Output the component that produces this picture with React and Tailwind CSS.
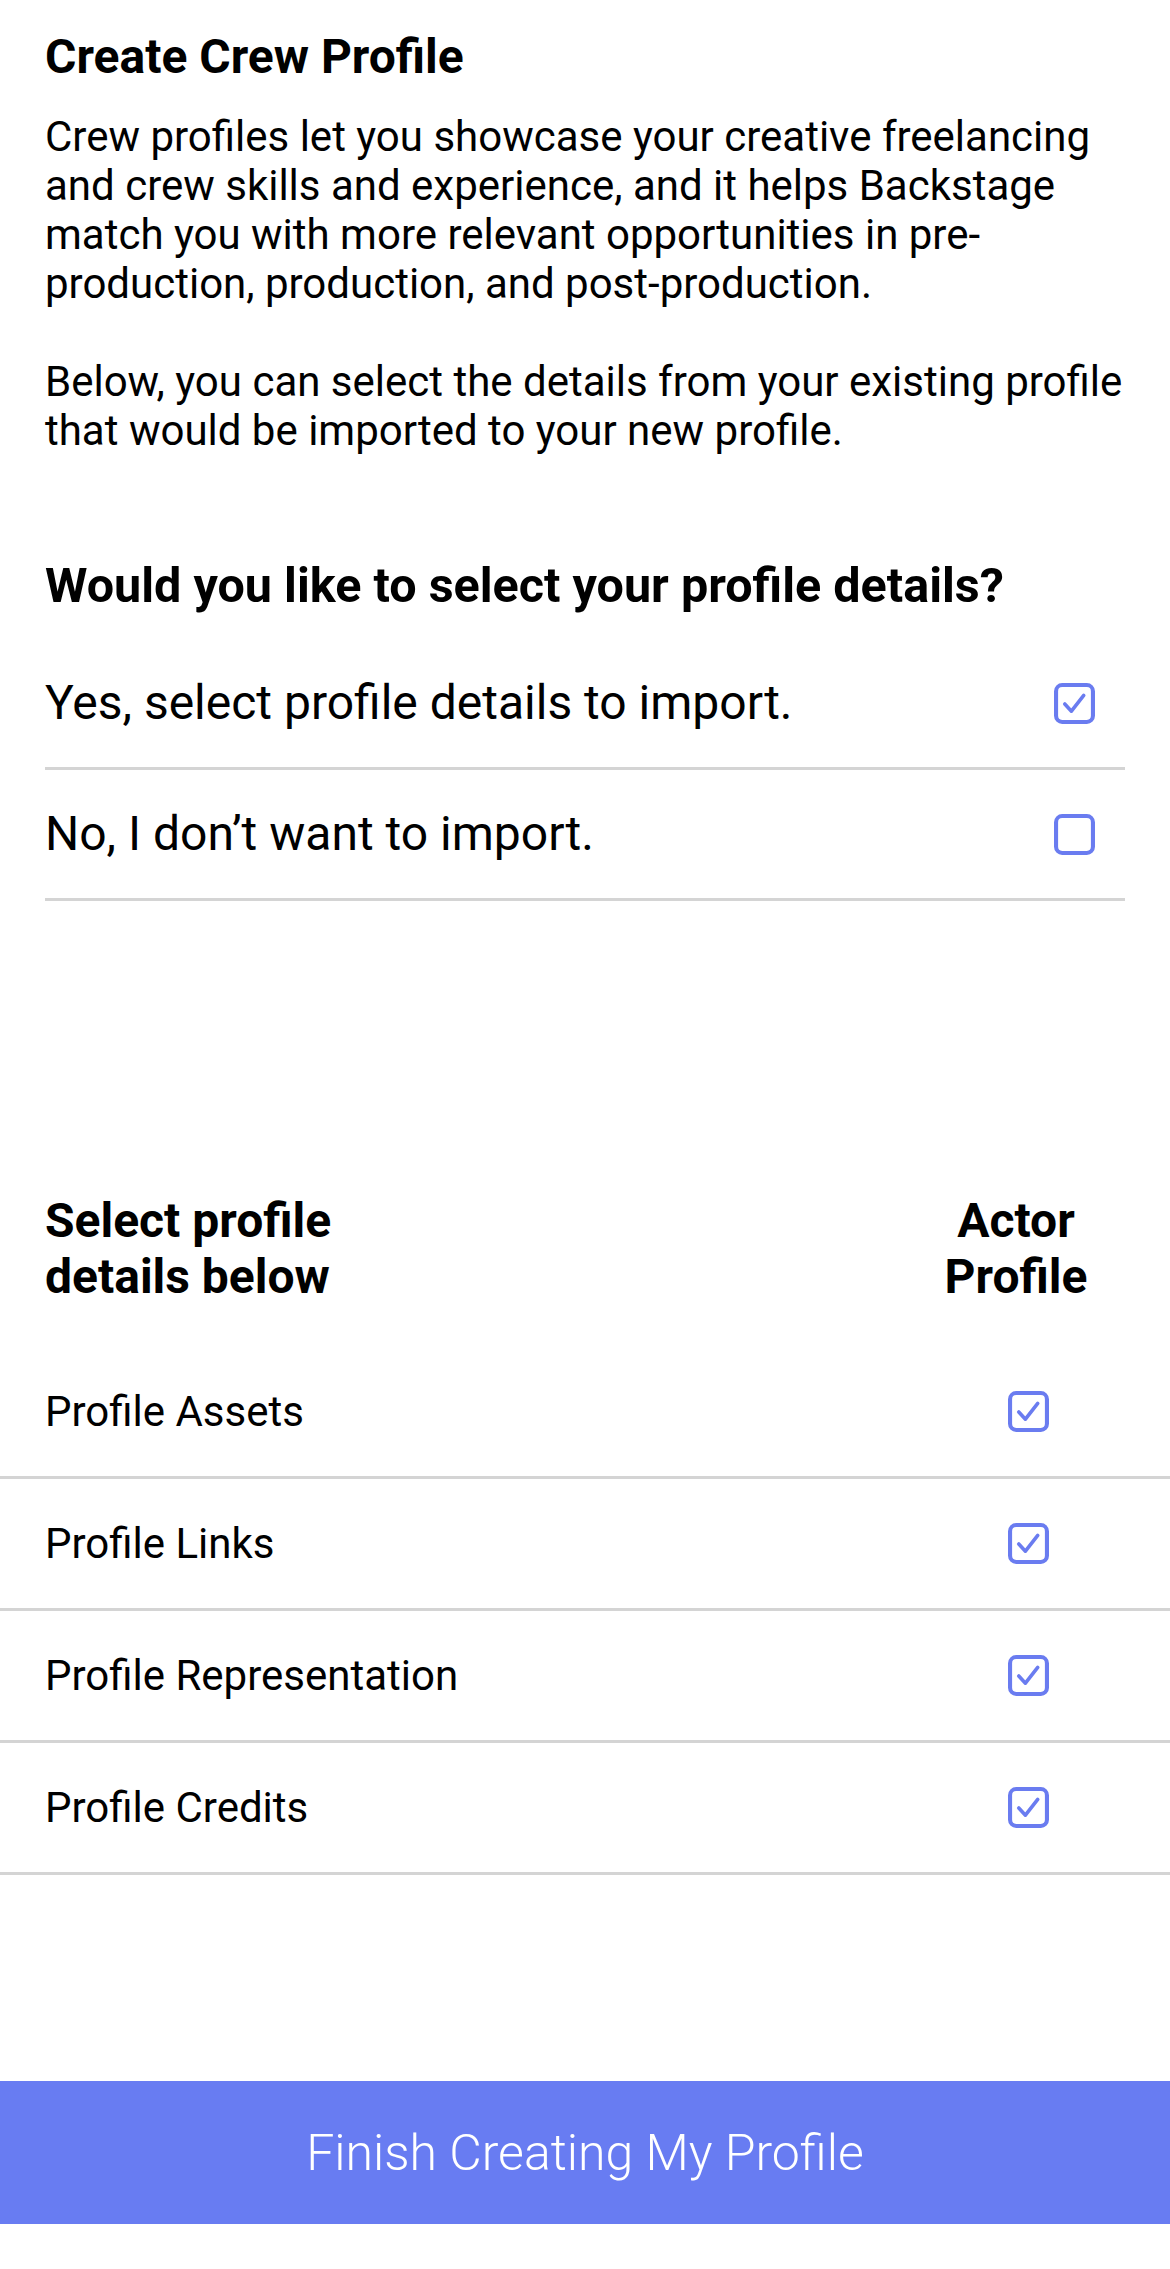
import React from "react";

function CheckBox({ checked }) {
  return (
    <svg width="41" height="41" viewBox="0 0 40 40" className="block shrink-0">
      <rect x="2" y="2" width="36" height="36" rx="6" fill="white" stroke="#6a7cf0" strokeWidth="4" />
      {checked && (
        <polyline
          points="10.5,20.5 17,27.5 29,12"
          fill="none"
          stroke="#6a7cf0"
          strokeWidth="3.5"
          strokeLinecap="round"
          strokeLinejoin="round"
        />
      )}
    </svg>
  );
}

function OptionRow({ label, checked }) {
  return (
    <div className="h-[131px] flex items-center justify-between border-b-[3px] border-[#d4d4d4]">
      <span className="text-[48px] leading-[56px] whitespace-nowrap">{label}</span>
      <div className="mr-[30px]">
        <CheckBox checked={checked} />
      </div>
    </div>
  );
}

function DetailRow({ label }) {
  return (
    <div className="h-[132px] flex items-center justify-between border-b-[3px] border-[#d4d4d4] pl-[45px] pr-[121px]">
      <span className="text-[42px] leading-[49px] whitespace-nowrap">{label}</span>
      <CheckBox checked />
    </div>
  );
}

export default function App() {
  return (
    <div className="w-[1170px] min-h-[2269px] bg-white text-black font-['Roboto','Liberation_Sans',sans-serif]">
      <div className="px-[45px] pt-[29px]">
        <h1 className="text-[48px] leading-[56px] font-bold">Create Crew Profile</h1>
        <div className="mt-[27px] text-[42px] leading-[49px]">
          <p>
            <span className="block whitespace-nowrap">Crew profiles let you showcase your creative freelancing</span>
            <span className="block whitespace-nowrap">and crew skills and experience, and it helps Backstage</span>
            <span className="block whitespace-nowrap">match you with more relevant opportunities in pre-</span>
            <span className="block whitespace-nowrap">production, production, and post-production.</span>
          </p>
          <p className="mt-[49px]">
            <span className="block whitespace-nowrap">Below, you can select the details from your existing profile</span>
            <span className="block whitespace-nowrap">that would be imported to your new profile.</span>
          </p>
        </div>
        <h2 className="mt-[103px] text-[48.5px] leading-[56px] font-bold whitespace-nowrap">
          Would you like to select your profile details?
        </h2>
        <div className="mt-[25px]">
          <OptionRow label="Yes, select profile details to import." checked />
          <OptionRow label="No, I don’t want to import." checked={false} />
        </div>
      </div>

      <div className="mt-[292px] flex items-start justify-between pl-[45px]">
        <div className="text-[48px] leading-[56px] font-bold">
          <span className="block">Select profile</span>
          <span className="block">details below</span>
        </div>
        <div className="w-[160px] mr-[74px] text-center text-[48px] leading-[56px] font-bold">
          <span className="block">Actor</span>
          <span className="block">Profile</span>
        </div>
      </div>

      <div className="mt-[42px]">
        <DetailRow label="Profile Assets" />
        <DetailRow label="Profile Links" />
        <DetailRow label="Profile Representation" />
        <DetailRow label="Profile Credits" />
      </div>

      <div className="mt-[206px] h-[143px] bg-[#687cf2] flex items-center justify-center">
        <span className="text-white text-[50px] leading-[58px] font-light">Finish Creating My Profile</span>
      </div>
    </div>
  );
}
